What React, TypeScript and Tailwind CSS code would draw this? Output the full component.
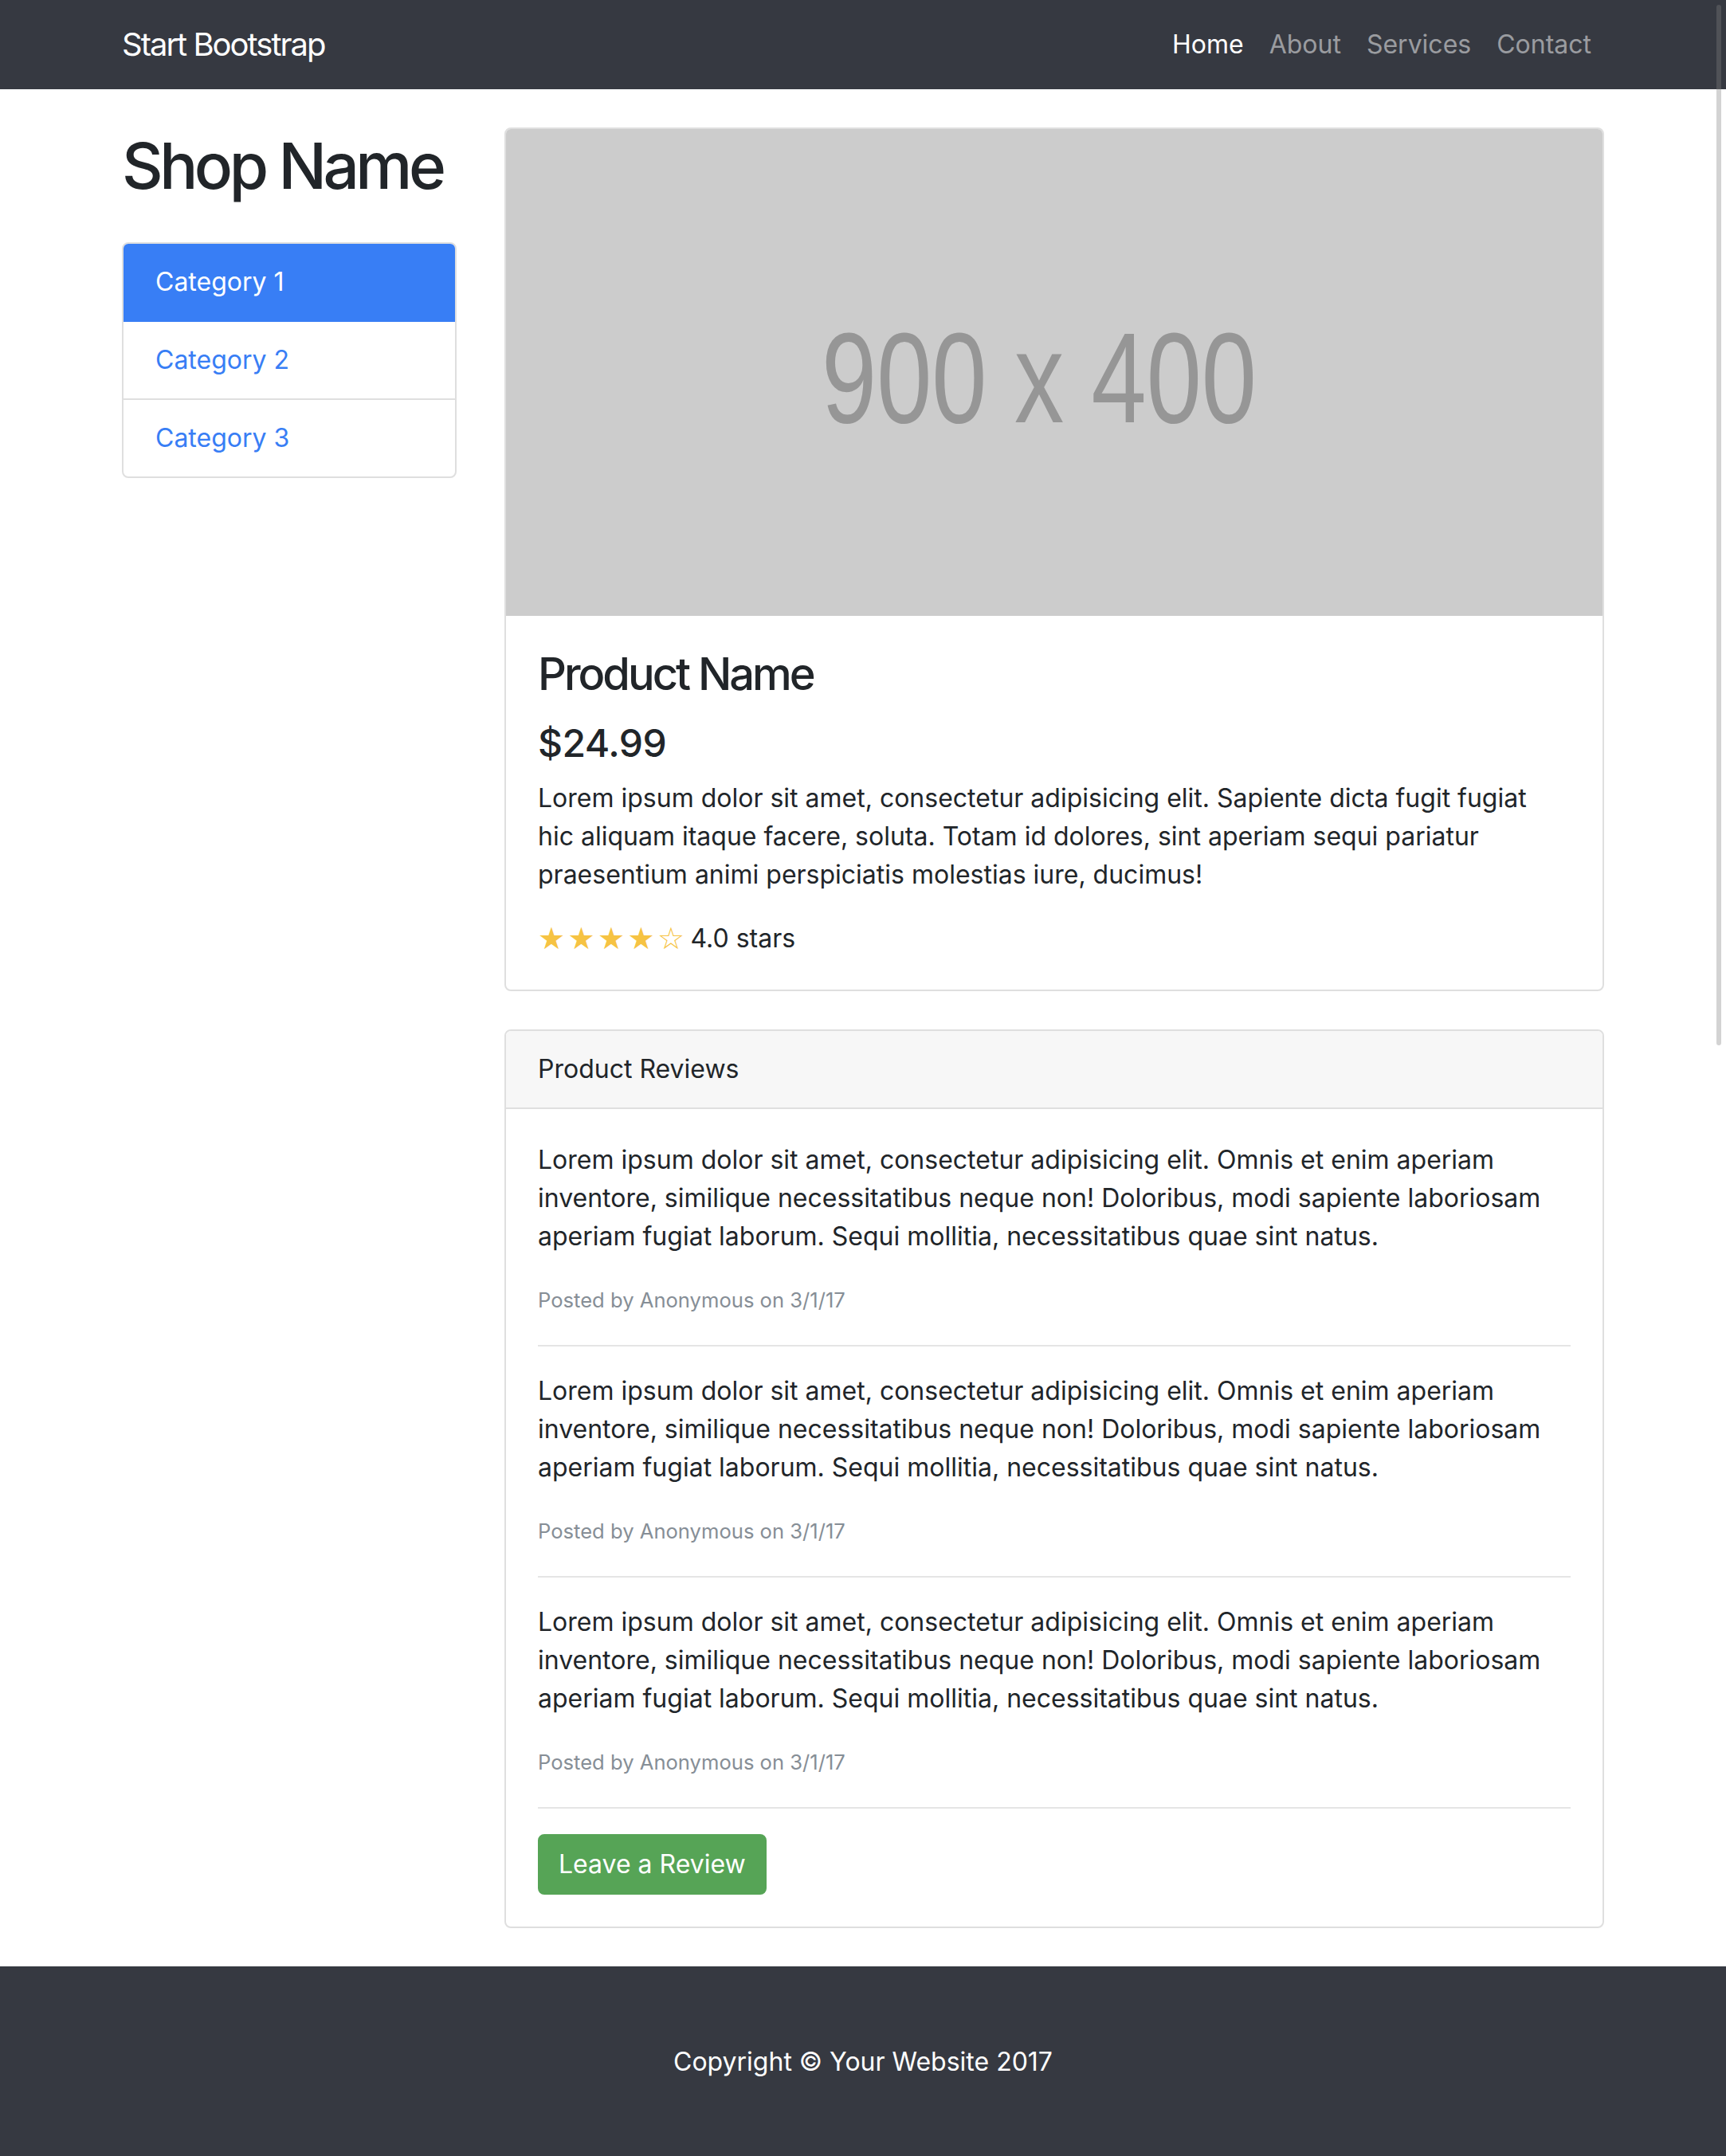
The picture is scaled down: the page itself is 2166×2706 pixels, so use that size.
const reviews = [1, 2, 3];

const loremReview =
  "Lorem ipsum dolor sit amet, consectetur adipisicing elit. Omnis et enim aperiam inventore, similique necessitatibus neque non! Doloribus, modi sapiente laboriosam aperiam fugiat laborum. Sequi mollitia, necessitatibus quae sint natus.";

function Navbar() {
  return (
    <nav className="h-[112px] bg-[#363941]">
      <div className="w-[1860px] mx-auto h-full flex items-center justify-between">
        <a className="text-[40px] leading-[60px] tracking-[-2px] text-white">Start Bootstrap</a>
        <ul className="flex items-center">
          <li className="px-[16px] text-[32px] leading-[48px] text-white">Home</li>
          <li className="px-[16px] text-[32px] leading-[48px] text-white/50">About</li>
          <li className="px-[16px] text-[32px] leading-[48px] text-white/50">Services</li>
          <li className="px-[16px] text-[32px] leading-[48px] text-white/50">Contact</li>
        </ul>
      </div>
    </nav>
  );
}

function Sidebar() {
  return (
    <div className="w-[420px] shrink-0">
      <h1 className="my-[48px] text-[80px] leading-[96px] font-medium tracking-[-4.5px] whitespace-nowrap">
        Shop Name
      </h1>
      <div className="rounded-[8px] border-2 border-[#dfdfdf] overflow-hidden text-[32px] leading-[48px]">
        <div className="-m-[2px] mb-0 px-[42px] py-[26px] bg-[#387ef5] text-white rounded-t-[8px]">
          Category 1
        </div>
        <div className="px-[40px] py-[24px] text-[#387ef5] border-b-2 border-[#dfdfdf]">Category 2</div>
        <div className="px-[40px] py-[24px] text-[#387ef5]">Category 3</div>
      </div>
    </div>
  );
}

function Placeholder() {
  return (
    <svg viewBox="0 0 1376 611" className="block w-full h-[611px]">
      <rect width="1376" height="611" fill="#cccccc" />
      <text
        x="396"
        y="368"
        fontFamily="Liberation Sans, Arial, sans-serif"
        fontSize="161"
        fill="#969696"
        textLength="546"
        lengthAdjust="spacingAndGlyphs"
      >
        900 x 400
      </text>
    </svg>
  );
}

function Stars() {
  return (
    <span className="inline-flex text-[#f6c343] text-[38px] font-['DejaVu_Sans',sans-serif] mr-[4px]">
      <span className="w-[37.5px]">&#9733;</span>
      <span className="w-[37.5px]">&#9733;</span>
      <span className="w-[37.5px]">&#9733;</span>
      <span className="w-[37.5px]">&#9733;</span>
      <span className="w-[37.5px]">&#9734;</span>
    </span>
  );
}

function ProductCard() {
  return (
    <div className="mt-[48px] border-2 border-[#dfdfdf] rounded-[8px] overflow-hidden">
      <Placeholder />
      <div className="p-[40px]">
        <h3 className="text-[56px] leading-[67px] font-medium tracking-[-3px] mb-[24px]">Product Name</h3>
        <h4 className="text-[48px] leading-[58px] font-medium tracking-[-0.5px] mb-[16px]">$24.99</h4>
        <p className="text-[32px] leading-[48px] mb-[32px] pr-[30px]">
          Lorem ipsum dolor sit amet, consectetur adipisicing elit. Sapiente dicta fugit fugiat hic aliquam itaque
          facere, soluta. Totam id dolores, sint aperiam sequi pariatur praesentium animi perspiciatis molestias iure,
          ducimus!
        </p>
        <div className="flex items-center h-[48px] text-[32px] leading-[48px]">
          <Stars />
          <span>4.0 stars</span>
        </div>
      </div>
    </div>
  );
}

function ReviewsCard() {
  return (
    <div className="my-[48px] border-2 border-[#dfdfdf] rounded-[8px] overflow-hidden">
      <div className="px-[40px] py-[24px] bg-[#f7f7f7] border-b-2 border-[#dfdfdf] text-[32px] leading-[48px]">
        Product Reviews
      </div>
      <div className="p-[40px] text-[32px] leading-[48px]">
        {reviews.map((r) => (
          <div key={r}>
            <p className="mb-[32px]">{loremReview}</p>
            <div className="text-[25.6px] leading-[48px] text-[#868e96]">Posted by Anonymous on 3/1/17</div>
            <hr className="my-[32px] border-0 border-t-2 border-[#e5e5e5]" />
          </div>
        ))}
        <button className="px-[24px] py-[12px] border-2 border-[#56a456] bg-[#56a456] text-white rounded-[8px] text-[32px] leading-[48px]">
          Leave a Review
        </button>
      </div>
    </div>
  );
}

export default function App() {
  return (
    <div className="relative min-h-screen bg-white text-[#212529] font-['Inter','Liberation_Sans',sans-serif]">
      <Navbar />
      <div className="w-[1860px] mx-auto flex gap-[60px]">
        <Sidebar />
        <div className="w-[1380px]">
          <ProductCard />
          <ReviewsCard />
        </div>
      </div>
      <footer className="py-[96px] bg-[#363941]">
        <p className="text-center text-white text-[32px] leading-[48px]">Copyright &copy; Your Website 2017</p>
      </footer>
      {/* overlay scrollbar thumb */}
      <div className="absolute left-[2154px] top-[6px] w-[6px] h-[1306px] rounded-full bg-[rgba(128,128,128,0.35)]" />
    </div>
  );
}
